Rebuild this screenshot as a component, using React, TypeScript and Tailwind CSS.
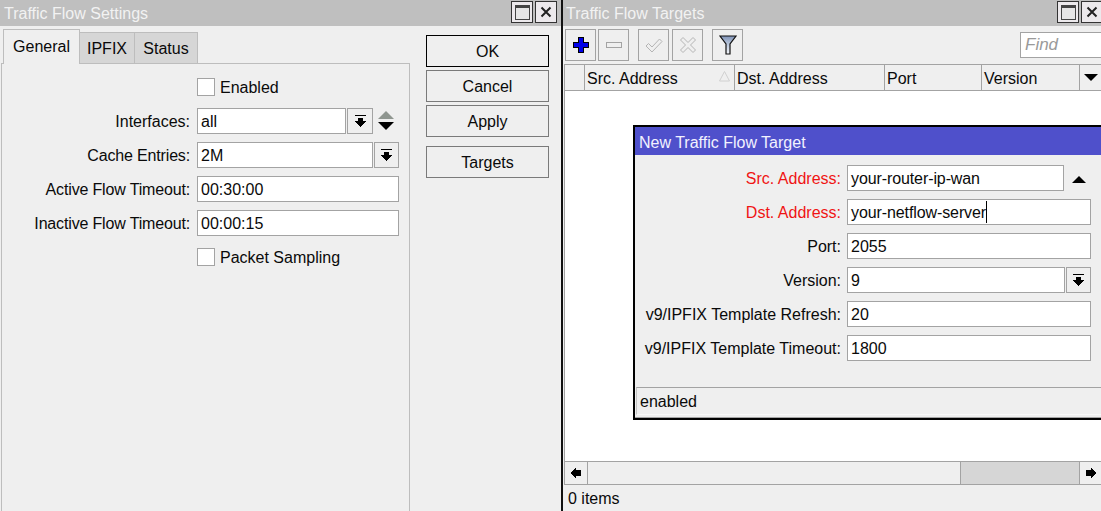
const FONT = "font-['Liberation_Sans',Arial,sans-serif]";

function DropIcon() {
  return (
    <svg width="11" height="13" viewBox="0 0 11 13" shapeRendering="crispEdges">
      <rect x="0" y="0" width="11" height="1" fill="#000" />
      <path d="M3 3h5v3h3l-5.500 6L0 6h3z" fill="#000" />
    </svg>
  );
}

function DropButton({ className }: { className: string }) {
  return (
    <div className={`flex h-[26px] items-center justify-center border border-[#a3a3a3] bg-[#efefef] ${className}`}>
      <DropIcon />
    </div>
  );
}

function TextBox({ value, className = "", caret }: { value: string; className?: string; caret?: boolean }) {
  return (
    <div className={`flex h-[26px] items-center border border-[#a3a3a3] bg-white pl-[3px] pt-[2px] ${className}`}>
      <span>{value}</span>
      {caret && <span className="-mt-[2px] h-[22px] w-px bg-black" />}
    </div>
  );
}

function WindowButtons() {
  return (
    <div className="flex gap-[2px]">
      <div className="flex h-[22px] w-[22px] items-center justify-center border border-[#333] bg-[#ece9ec]">
        <div className="h-[15px] w-[15px] border border-[#444] border-t-[3px] bg-[#e6e6e6]" />
      </div>
      <div className="flex h-[22px] w-[22px] items-center justify-center border border-[#333] bg-[#ece9ec]">
        <svg width="12" height="12" viewBox="0 0 12 12">
          <path d="M1.500 1.500l9 9M10.500 1.500l-9 9" stroke="#222" strokeWidth="2" fill="none" />
        </svg>
      </div>
    </div>
  );
}

function Row({ label, children, top, tight }: { label: string; children: React.ReactNode; top: string; tight?: boolean }) {
  return (
    <div className={`flex items-center ${top}`}>
      <div className={`w-[188px] pt-[2px] text-right ${tight ? "tracking-[-0.16px]" : ""}`}>{label}</div>
      <div className="ml-[7px] flex items-center">{children}</div>
    </div>
  );
}

function CheckRow({ label, top }: { label: string; top: string }) {
  return (
    <div className={`ml-[195px] flex h-[18px] items-center ${top}`}>
      <div className="h-[18px] w-[18px] border border-[#a3a3a3] bg-white" />
      <span className="ml-[5px] pt-[2px]">{label}</span>
    </div>
  );
}

function ToolButton({ children, className = "" }: { children: React.ReactNode; className?: string }) {
  return (
    <div className={`flex h-[32px] w-[31px] items-center justify-center border border-[#a3a3a3] bg-[#efefef] ${className}`}>
      {children}
    </div>
  );
}

function HeaderCell({ label, className }: { label: string; className: string }) {
  return (
    <div className={`flex h-full shrink-0 items-center border-r border-[#a3a3a3] pl-[2px] pt-[2px] ${className}`}>{label}</div>
  );
}

function DialogRow({ label, children, red }: { label: string; children: React.ReactNode; red?: boolean }) {
  return (
    <div className="flex h-[26px] items-center">
      <div className={`w-[206px] pt-[2px] text-right ${red ? "text-[#f01414]" : ""}`}>{label}</div>
      <div className="ml-[6px] flex items-center">{children}</div>
    </div>
  );
}

function ActionButton({ label, className }: { label: string; className: string }) {
  return <div className={`flex h-[32px] items-center justify-center border pt-[2px] ${className}`}>{label}</div>;
}

export default function App() {
  return (
    <div className={`flex h-[511px] w-[1101px] overflow-hidden bg-[#efefef] text-base text-[#0a0a0a] ${FONT}`}>
      {/* settings window */}
      <div className="flex h-full w-[561px] shrink-0 flex-col">
        <div className="flex h-[26px] shrink-0 items-start justify-between bg-[#bfbfbf] pl-[4px] pr-[4px]">
          <span className="pt-[2px] text-[#f2f2f2]">Traffic Flow Settings</span>
          <div className="pt-px">
            <WindowButtons />
          </div>
        </div>
        <div className="flex min-h-0 flex-1">
          <div className="flex w-[410px] shrink-0 flex-col pl-px">
            <div className="flex h-[37px] shrink-0 items-end pl-[2px]">
              <div className="relative z-10 -mb-px flex h-[35px] w-[77px] items-center justify-center border-l border-r border-t border-[#bdbdbd] bg-[#efefef]">
                General
              </div>
              <div className="flex h-[31px] w-[55px] items-center justify-center border-r border-t border-[#bdbdbd] bg-[#d6d6d6] pt-[2px]">
                IPFIX
              </div>
              <div className="flex h-[31px] w-[63px] items-center justify-center border-r border-t border-[#bdbdbd] bg-[#d6d6d6] pt-[2px]">
                Status
              </div>
            </div>
            <div className="flex-1 border-l border-r border-t border-[#bdbdbd]">
              <CheckRow label="Enabled" top="mt-[14px]" />
              <Row label="Interfaces:" top="mt-[12px]">
                <TextBox value="all" className="w-[149px]" />
                <DropButton className="ml-px w-[26px]" />
                <svg className="ml-[5px]" width="16" height="20" viewBox="0 0 16 20">
                  <path d="M8 0l8 8H0z" fill="#8f9690" />
                  <path d="M0 11h16l-8 8z" fill="#000" />
                </svg>
              </Row>
              <Row label="Cache Entries:" top="mt-[8px]" tight>
                <TextBox value="2M" className="w-[176px]" />
                <DropButton className="ml-px w-[25px]" />
              </Row>
              <Row label="Active Flow Timeout:" top="mt-[8px]" tight>
                <TextBox value="00:30:00" className="w-[202px]" />
              </Row>
              <Row label="Inactive Flow Timeout:" top="mt-[8px]" tight>
                <TextBox value="00:00:15" className="w-[202px]" />
              </Row>
              <CheckRow label="Packet Sampling" top="mt-[12px]" />
            </div>
          </div>
          <div className="ml-[16px] flex w-[123px] shrink-0 flex-col pt-[9px] text-center">
            <ActionButton label="OK" className="border-black" />
            <ActionButton label="Cancel" className="mt-[3px] border-[#7a7a7a]" />
            <ActionButton label="Apply" className="mt-[3px] border-[#7a7a7a]" />
            <ActionButton label="Targets" className="mt-[9px] border-[#7a7a7a]" />
          </div>
        </div>
      </div>

      <div className="h-full w-[2px] shrink-0 bg-[#111]" />

      {/* targets window */}
      <div className="relative flex h-full min-w-0 flex-1 flex-col">
        <div className="flex h-[26px] shrink-0 items-start justify-between bg-[#bfbfbf] pl-[3px]">
          <span className="pt-[2px] text-[#f2f2f2]">Traffic Flow Targets</span>
          <div className="-mr-[2px] pt-px">
            <WindowButtons />
          </div>
        </div>
        <div className="flex h-[38px] shrink-0 items-start pl-[2px] pt-[3px]">
          <ToolButton>
            <svg width="16" height="16" viewBox="0 0 16 16" shapeRendering="crispEdges">
              <path d="M5.500.5h5v5h5v5h-5v5h-5v-5h-5v-5h5z" fill="#0000e8" stroke="#000" />
            </svg>
          </ToolButton>
          <ToolButton className="ml-[2px]">
            <svg width="16" height="6" viewBox="0 0 16 6" shapeRendering="crispEdges">
              <rect x=".5" y=".5" width="15" height="5" fill="#efefef" stroke="#a3a3a3" />
            </svg>
          </ToolButton>
          <ToolButton className="ml-[9px]">
            <svg width="18" height="15" viewBox="0 0 18 15">
              <path d="M1 8l2.500-2.500L7 9l7.500-8L17 3.500 7 14z" fill="#efefef" stroke="#b4b4b4" />
            </svg>
          </ToolButton>
          <ToolButton className="ml-[3px]">
            <svg width="16" height="16" viewBox="0 0 16 16">
              <path d="M.5 3L3 .5l5 5 5-5L15.500 3l-5 5 5 5-2.500 2.500-5-5-5 5L.5 13l5-5z" fill="#efefef" stroke="#b4b4b4" />
            </svg>
          </ToolButton>
          <ToolButton className="ml-[9px]">
            <svg width="18" height="20" viewBox="0 0 18 20">
              <defs>
                <linearGradient id="funnel" x1="0" y1="0" x2="0" y2="1">
                  <stop offset="0" stopColor="#7f93b8" />
                  <stop offset=".45" stopColor="#b9c6da" />
                  <stop offset="1" stopColor="#f4f6fa" />
                </linearGradient>
              </defs>
              <path d="M1 1h16l-6 8v10H7V9z" fill="url(#funnel)" stroke="#111" strokeWidth="1.200" />
            </svg>
          </ToolButton>
          <div className="-mr-[9px] ml-auto mt-[3px] flex h-[26px] w-[90px] shrink-0 items-center border border-[#a3a3a3] bg-white pl-[4px] text-[17px] italic text-[#9a9a9a]">
            Find
          </div>
        </div>
        <div className="ml-px flex h-[27px] shrink-0 items-center border-b border-l border-t border-[#a3a3a3]">
          <div className="h-full w-[20px] shrink-0 border-r border-[#a3a3a3]" />
          <div className="relative flex h-full w-[150px] shrink-0 items-center border-r border-[#a3a3a3] pl-[2px] pt-[2px]">
            Src. Address
            <svg className="absolute right-[4px] top-[6px]" width="11" height="11" viewBox="0 0 11 11">
              <path d="M5.500 .5L10.500 10H.5z" fill="none" stroke="#d0d0d0" />
            </svg>
          </div>
          <HeaderCell label="Dst. Address" className="w-[150px]" />
          <HeaderCell label="Port" className="w-[97px]" />
          <HeaderCell label="Version" className="w-[98px]" />
          <div className="flex h-full flex-1 items-center justify-center">
            <svg width="14" height="8" viewBox="0 0 14 8">
              <path d="M0 0h14L7 7z" fill="#000" />
            </svg>
          </div>
        </div>
        <div className="ml-px min-h-0 flex-1 border-l border-[#a3a3a3] bg-white" />
        <div className="ml-px flex h-[24px] shrink-0 items-stretch border-b border-l border-t border-[#a3a3a3]">
          <div className="flex w-[23px] shrink-0 items-center justify-center border-r border-[#a3a3a3]">
            <svg width="10" height="12" viewBox="0 0 10 12" shapeRendering="crispEdges">
              <path d="M5 0v3h5v6H5v3L0 6z" fill="#000" />
            </svg>
          </div>
          <div className="w-[372px] shrink-0" />
          <div className="w-[120px] shrink-0 border-l border-r border-[#a3a3a3] bg-[#d6d6d6]" />
          <div className="flex flex-1 items-center justify-center">
            <svg width="10" height="12" viewBox="0 0 10 12" shapeRendering="crispEdges">
              <path d="M5 0v3H0v6h5v3l5-6z" fill="#000" />
            </svg>
          </div>
        </div>
        <div className="flex h-[26px] shrink-0 items-center pl-[5px] pt-[2px]">0 items</div>

        {/* new target dialog, floats over the list */}
        <div className="absolute left-[70px] top-[125px] flex h-[295px] w-[520px] flex-col border-2 border-black bg-[#efefef]">
          <div className="flex h-[28px] shrink-0 items-center bg-[#4f50cb] pl-[4px] pt-[4px] text-[#f2f2ff]">New Traffic Flow Target</div>
          <div className="flex flex-1 flex-col gap-[8px] pt-[10px]">
            <DialogRow label="Src. Address:" red>
              <TextBox value="your-router-ip-wan" className="w-[217px] tracking-[-0.1px]" />
              <svg className="ml-[8px] mt-[3px]" width="14" height="8" viewBox="0 0 14 8">
                <path d="M7 0l7 7H0z" fill="#000" />
              </svg>
            </DialogRow>
            <DialogRow label="Dst. Address:" red>
              <TextBox value="your-netflow-server" className="w-[244px] tracking-[-0.1px]" caret />
            </DialogRow>
            <DialogRow label="Port:">
              <TextBox value="2055" className="w-[244px]" />
            </DialogRow>
            <DialogRow label="Version:">
              <TextBox value="9" className="w-[218px]" />
              <DropButton className="ml-px w-[25px]" />
            </DialogRow>
            <DialogRow label="v9/IPFIX Template Refresh:">
              <TextBox value="20" className="w-[244px]" />
            </DialogRow>
            <DialogRow label="v9/IPFIX Template Timeout:">
              <TextBox value="1800" className="w-[244px]" />
            </DialogRow>
          </div>
          <div className="mb-[2px] ml-px flex h-[28px] shrink-0 items-center border-b border-l border-t border-b-[#f8f8f8] border-l-[#c4c4c4] border-t-[#a3a3a3] pl-[3px] pt-[2px]">
            enabled
          </div>
          <div className="h-px shrink-0 bg-[#a3a3a3]" />
        </div>
      </div>
    </div>
  );
}
